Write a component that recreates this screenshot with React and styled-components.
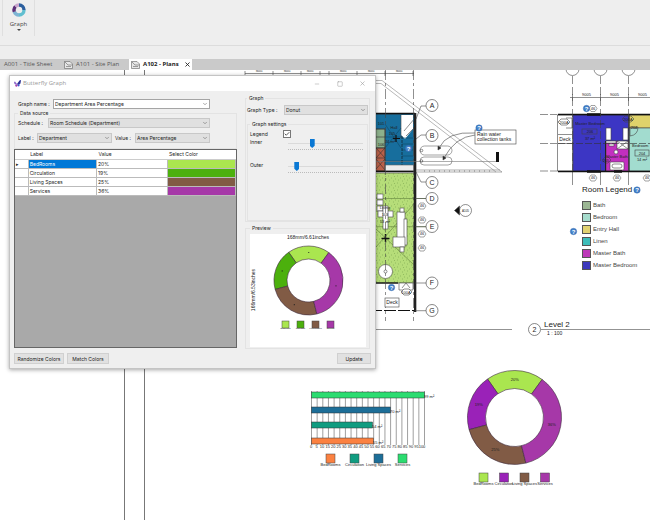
import React, { useState } from 'react';
import styled, { createGlobalStyle } from 'styled-components';
import { Check, ChevronDown, Minus, Square, X } from 'lucide-react';

const departments = [
    { name: 'BedRooms', value: '20%', color: '#aae64f' },
    { name: 'Circulation', value: '19%', color: '#4cb00d' },
    { name: 'Living Spaces', value: '25%', color: '#815b45' },
    { name: 'Services', value: '36%', color: '#a638a8' },
];

const rooms = [
    { name: 'Bath', color: '#9bb693' },
    { name: 'Bedroom', color: '#a6dccd' },
    { name: 'Entry Hall', color: '#e1d271' },
    { name: 'Linen', color: '#3dbdb9' },
    { name: 'Master Bath', color: '#bd39b9' },
    { name: 'Master Bedroom', color: '#3d39bd' },
];

const areaBars = [
    { label: '99 m²', width: 113, y: 392, color: '#2bdc70' },
    { label: '70 m²', width: 79, y: 407, color: '#1d6e98' },
    { label: '54 m²', width: 61, y: 422, color: '#109c80' },
    { label: '55 m²', width: 62, y: 438, color: '#fb8141' },
];

const areaLegend = [
    { name: 'BedRooms', color: '#fb8141' },
    { name: 'Circulation', color: '#109c80' },
    { name: 'Living Spaces', color: '#1d6e98' },
    { name: 'Services', color: '#2bdc70' },
];

// angles run clockwise from twelve o'clock
const segments = [
    { from: -35, to: 36, text: '20%' },
    { from: 255, to: 325, text: '19%' },
    { from: 166, to: 255, text: '25%' },
    { from: 36, to: 166, text: '36%' },
];

const point = (cx, cy, r, deg) => {
    const a = (deg - 90) * Math.PI / 180;
    return [(cx + r * Math.cos(a)).toFixed(2), (cy + r * Math.sin(a)).toFixed(2)];
};

const ringPath = (cx, cy, outer, inner, from, to) => {
    const a = point(cx, cy, outer, from);
    const b = point(cx, cy, outer, to);
    const c = point(cx, cy, inner, to);
    const d = point(cx, cy, inner, from);
    return `M${a} A${outer} ${outer} 0 0 1 ${b} L${c} A${inner} ${inner} 0 0 0 ${d}Z`;
};

const Donut = ({ cx, cy, outer, inner, colors, labels }) => (
    <g>
        {segments.map((s, i) => {
            const [x, y] = point(cx, cy, (outer + inner) / 2, (s.from + s.to) / 2);
            return (
                <g key={s.text}>
                    <path d={ringPath(cx, cy, outer, inner, s.from, s.to)} fill={colors[i]} stroke="#3c2a3c" strokeWidth="0.6" />
                    {labels
                        ? <Note x={x} y={Number(y) + 1} $size={4} $middle>{s.text}</Note>
                        : <circle cx={x} cy={y} r="0.6" fill="#222" />}
                </g>
            );
        })}
    </g>
);

const Bubble = ({ x, y, r = 6, children }) => (
    <g>
        <circle cx={x} cy={y} r={r} fill="#fff" stroke="#555" strokeWidth="0.7" />
        <Note x={x} y={y + 2} $size={7} $middle>{children}</Note>
    </g>
);

const WindowTag = ({ x, y }) => (
    <g>
        <path d={`M${x - 4} ${y} l2 -3 h4 l2 3 l-2 3 h-4z`} fill="#fff" stroke="#666" strokeWidth="0.6" />
        <Note x={x} y={y + 1} $size={4} $middle>46</Note>
    </g>
);

const HelpDot = ({ x, y }) => (
    <g>
        <circle cx={x} cy={y} r="3.2" fill="#4380c9" stroke="#2a5fa5" strokeWidth="0.4" />
        <text x={x} y={y + 2} fontSize="6" fontWeight="700" textAnchor="middle" fill="#fff">?</text>
    </g>
);

const GroundPlan = () => (
    <g fill="none" stroke="#444" strokeWidth="0.6">
        <path d="M245 73.5H414" />
        <path d="M245 71v5M273 71v5M301 71v5M320 71v5M329 71v5M357 71v5M385 71v5M413 71v5" />
        <g stroke="none">
            {[259, 287, 310, 343, 371, 399].map(x => <Note key={x} x={x} y={72} $size={3} $middle>9005</Note>)}
        </g>
        <path d="M376 80.5h6L502 172M376 83.5h5L496 172" stroke="#888" />

        <rect x="370" y="114" width="44" height="57" fill="#176e9d" />
        <rect x="376" y="129" width="9" height="19" fill="#8db18c" />
        <rect x="376" y="148" width="9" height="23" fill="#bb6048" />
        <path d="M376 129h9v42h-9M376 137h9M376 148h9M376 158h9M376 148l9 10M385 148l-9 10M376 159l9 11M385 159l-9 10" stroke="#333" />
        <path d="M401 115h12v14l-8 10l-4-4z" fill="#fff" stroke="none" />
        <path d="M401 115v23M404 131l11-13M406 136l9-9" />
        <path d="M385 148l16-20M385 124l16 24M385 137h16M402 138h11M402 144h11M402 150h11M402 156h11M402 161h11M385 161h17" stroke="#0d4867" />
        <path d="M396 135v7M393 138.5h7" stroke="#111" strokeWidth="1.2" />
        <path d="M402 136v32" stroke="#111" strokeDasharray="3 1" />
        <path d="M370 113.5h45" stroke="#111" strokeWidth="1.5" />
        <path d="M385 165h29v6h-29z" fill="#ececec" stroke="#666" />
        <path d="M370 171.5h45" stroke="#111" strokeWidth="1.3" />
        <g stroke="none">
            <Note x={394} y={129} $size={4} $middle>Hall</Note>
            <Note x={392} y={135} $size={4} $middle>105</Note>
            <Note x={390} y={143} $size={4} $middle>24 m²</Note>
            <Note x={381} y={125} $size={4} $middle>101</Note>
            <Note x={381} y={146} $size={4} $middle>106</Note>
        </g>

        <rect x="370" y="173" width="44" height="110" fill="#b6dd79" />
        <rect x="370" y="173" width="44" height="110" fill="url(#stipple)" stroke="none" />
        <path d="M376 247l38-43M376 229l38 36M376 198.500h51M376 226.700h51" stroke="#61823c" />
        <g fill="#fff">
            <rect x="377" y="194" width="6" height="5" />
            <rect x="377" y="200" width="6" height="5" />
            <rect x="377" y="206" width="6" height="5" />
            <rect x="378" y="211" width="15" height="6" />
            <rect x="383" y="206" width="5" height="23" />
            <rect x="397" y="212" width="8" height="31" />
            <rect x="404" y="219" width="3" height="26" />
            <rect x="393" y="237" width="12" height="10" />
            <rect x="400" y="208" width="4" height="4" />
            <rect x="400" y="247" width="4" height="5" />
            <circle cx="385.500" cy="271.500" r="7" />
            <circle cx="385.500" cy="271.500" r="1.500" />
        </g>
        <g stroke="none">
            <Note x={385} y={209} $size={4} $middle>Living</Note>
            <Note x={385} y={216} $size={4} $middle>103</Note>
            <Note x={385} y={223} $size={4} $middle>53 m²</Note>
        </g>
        <path d="M385.500 234v8M381.500 238.500h8" stroke="#111" strokeWidth="1.400" />
        <path d="M370 283h28" stroke="#111" strokeWidth="1.300" />
        <path d="M370 310.500h45" stroke="#111" strokeWidth="1.200" strokeDasharray="12 2" />
        <path d="M399 283h14v7h-14zM402 288l4-5l4 5" fill="#fff" />
        <path d="M401 292l3-3h5l3 3l-3 3h-5z" fill="#fff" />
        <Note x={406} y={294} $size={4} $middle stroke="none">100A</Note>
        <path d="M415 113v199" stroke="#222" strokeWidth="2" />
        <path d="M416.500 113v199" stroke="#888" />
        <path d="M385.500 70v251M413.500 70v251" strokeDasharray="10 3 3 3" />
        <rect x="385" y="298" width="14" height="9" fill="#fff" />
        <Note x={392} y={304} $size={5} $middle stroke="none">Deck</Note>

        <path d="M376 161.500h121M416 170h84M416 172h86" stroke="#777" />
        <path d="M424 171h70" stroke="#999" strokeWidth="1.500" strokeDasharray="1 4" />
        <rect x="420" y="146" width="32" height="9" rx="4.500" stroke="#666" />
        <rect x="420" y="157" width="32" height="8" rx="4" stroke="#666" />
        <circle cx="421.500" cy="150.500" r="1.300" />
        <circle cx="421.500" cy="161" r="1.300" />
        <path d="M475 133q-28-2-36 15M475 135q-20 2-31 23" />
        <path d="M438 150l0-4l3 2zM443 160l0-4l3 2z" fill="#222" />
        <rect x="496" y="152" width="3" height="10" fill="#111" stroke="none" />
        <path d="M416 119l5-13h5M416 139l5-4h5M416 172l5 10h5M415 198.500h12M415 226.700h12M415 283h12M415 310.700h12" />

        <g stroke="none">
            <Bubble x={432} y={198.5}>D</Bubble>
            <Bubble x={432} y={182.5}>C</Bubble>
            <Bubble x={432} y={105.5}>A</Bubble>
            <Bubble x={432} y={135.5}>B</Bubble>
            <Bubble x={432} y={226.5}>E</Bubble>
            <Bubble x={432} y={283}>F</Bubble>
            <Bubble x={432} y={310.5}>G</Bubble>
            {[206, 220, 234, 248].map(y => <WindowTag key={y} x={422} y={y} />)}
        </g>
        <circle cx="465.500" cy="210.500" r="6" fill="#fff" />
        <path d="M459.500 206v9l-5-4.500z" fill="#111" />
        <Note x={465.5} y={212} $size={3} $middle stroke="none">A105</Note>
        <rect x="475" y="130" width="41" height="14" fill="#fff" />
        <g stroke="none">
            <Note x={477} y={136} $size={5}>Rain water</Note>
            <Note x={477} y={141} $size={5}>collection tanks</Note>
            <HelpDot x={479} y={128} />
            <HelpDot x={408.5} y={148.5} />
            <HelpDot x={391.5} y={287.5} />
        </g>
    </g>
);

const UpperPlan = () => (
    <g fill="none" stroke="#444" strokeWidth="0.6">
        {[572.5, 600.5, 628.5].map(x => <circle key={x} cx={x} cy="69" r="6.5" fill="#fff" />)}
        <path d="M570 97.500h80" />
        <path d="M572.500 94v7M600.500 94v7M628.500 94v7M572.500 171v14M600.500 171v14M628.500 171v14" />
        <path d="M540 114.500h17M540 143.500h17M540 171h17" strokeDasharray="8 2" />
        <rect x="557.500" y="115" width="15" height="56" fill="#fff" />
        <path d="M558 134.500h14M558 143.500h14M566 128h6v-10h-6" />
        <rect x="573" y="115" width="56" height="56" fill="#3c36c4" />
        <rect x="606" y="141" width="23" height="30" fill="#c22fc0" />
        <rect x="629" y="115" width="60" height="13" fill="#dfd26b" />
        <rect x="629" y="128" width="60" height="43" fill="#a2dccf" />
        <g fill="#fff">
            <rect x="606" y="128" width="5" height="12" />
            <rect x="623" y="128" width="5" height="12" />
            <path d="M606 141h10v2h-10z" />
            <rect x="617" y="141" width="11" height="8" />
            <rect x="609" y="144" width="5" height="2" />
            <circle cx="616" cy="152" r="2" />
            <rect x="610" y="162" width="14" height="8" rx="1" />
            <rect x="612" y="164" width="10" height="4" rx="2" />
        </g>
        <path d="M617 141l11 8M628 141l-11 8M602 160l3-3h3l3 3l-3 3h-3zM622 119l3-3h6l3 3l-3 3h-6zM630 127h8q0 8-8 9z" />
        <path d="M605.500 141v30M629 115v56" stroke="#222" strokeWidth="1" />
        <path d="M558 114.500h92M558 171.500h92" stroke="#111" strokeWidth="1.500" />
        <path d="M587 114.500h14M587 171.500h14M614 171.500h8" stroke="#111" strokeWidth="2.400" />
        <path d="M572.500 76v95M600.500 76v95M628.500 76v95" strokeDasharray="8 3" />
        <path d="M558 143.500h92" stroke="#333" strokeDasharray="7 2" />
        <path d="M558 122l3-3h6l3 3l-3 3h-6z" fill="#fff" />
        <rect x="582" y="129" width="15" height="5" />
        <rect x="635" y="150" width="14" height="6" />
        <g stroke="none">
            {[586.5, 614.5, 642.5].map(x => <Note key={x} x={x} y={96} $size={4} $middle>9005</Note>)}
            <Note x={564} y={124} $size={4} $middle>200A</Note>
            <Note x={565} y={141} $size={5} $middle>Deck</Note>
            <Note x={590} y={125} $size={4} $middle>Master Bedroom</Note>
            <Note x={590} y={133} $size={4} $middle>206</Note>
            <Note x={590} y={140} $size={4} $middle>37 m²</Note>
            <Note x={617} y={158} $size={4} $middle>Master Bath</Note>
            <Note x={628} y={121} $size={4} $middle>200A</Note>
            <Note x={634} y={129} $size={4} $middle>204</Note>
            <Note x={606} y={162} $size={4} $middle>205</Note>
            <Note x={632} y={147} $size={4}>Bedroom</Note>
            <Note x={642} y={155} $size={4} $middle>204</Note>
            <Note x={642} y={161} $size={4} $middle>14 m²</Note>
            <WindowTag x={593} y={108.5} />
            <WindowTag x={593} y={178} />
            <WindowTag x={617} y={178} />
            <WindowTag x={647} y={178} />
            <HelpDot x={586.5} y={108.5} />
        </g>
    </g>
);

const AreaChart = () => (
    <g>
        {Array.from({ length: 21 }, (_, i) => (
            <g key={i}>
                <path d={`M${311.5 + i * 5.65} 391V445`} stroke="#777" strokeWidth="0.7" />
                <Note x={311 + i * 5.55} y={448} $size={4} $middle>{i * 5}</Note>
            </g>
        ))}
        {areaBars.map(bar => (
            <g key={bar.label}>
                <rect x="311.500" y={bar.y} width={bar.width} height="6" fill={bar.color} stroke="#333" strokeWidth="0.5" />
                <Note x={311 + bar.width} y={bar.y + 6} $size={4}>{bar.label}</Note>
            </g>
        ))}
        <SwatchRow items={areaLegend} x={326} y={454} step={24} size={9} />
    </g>
);

const SwatchRow = ({ items, x, y, step, size, textSize = 4 }) => items.map((item, i) => (
    <g key={item.name}>
        <rect x={x + i * step} y={y} width={size} height={size} fill={item.color} stroke="#444" strokeWidth="0.5" />
        <Note x={x + i * step + size / 2} y={y + size + textSize - 1} $size={textSize} $middle>{item.name}</Note>
    </g>
));

const ButterflyMark = () => (
    <svg width="7" height="7" viewBox="0 0 14 14" aria-hidden="true">
        <path d="M6 8L11 1l3-1-1 7-5 3z" fill="#2a2f94" />
        <path d="M6 8L2 3 0 4l1 4 4 2z" fill="#8a63c8" />
        <path d="M7 9l5 0-2 4-3-1z" fill="#3a56d4" />
        <path d="M7 9L2 10l2 4 3-2z" fill="#a83fa8" />
    </svg>
);

const SheetIcon = () => (
    <svg width="9" height="8" viewBox="0 0 18 16" fill="none" stroke="#777" strokeWidth="1.4" aria-hidden="true">
        <path d="M1 1h11l5 5v9H1z" fill="#e6e6e6" />
        <path d="M1 1l7 7h9M4 11h10" />
    </svg>
);

const GraphLogo = () => (
    <svg width="14" height="14" viewBox="0 0 14 14" fill="none" strokeWidth="3.4" aria-hidden="true">
        <path d="M7 2a5 5 0 0 1 5 5" stroke="#2c5f9e" />
        <path d="M12 7a5 5 0 0 1-5 5" stroke="#61bfd0" />
        <path d="M7 12a5 5 0 0 1-4.700-3.300" stroke="#7eb4d4" />
        <path d="M2.300 8.700a5 5 0 0 1 1.200-5.200" stroke="#5b2f78" />
        <path d="M3.500 3.500a5 5 0 0 1 3.500-1.500" stroke="#c9a6cd" />
    </svg>
);

const Picker = ({ id, value }) => (
    <PickerBox>
        <PickerSelect id={id} defaultValue={value}>
            <option>{value}</option>
        </PickerSelect>
        <Arrow size={6} />
    </PickerBox>
);

const DepartmentTable = () => (
    <TableArea>
        <Table>
            <thead>
                <tr>
                    <Head $width={6} aria-label="Current row" />
                    <Head $width={31}>Label</Head>
                    <Head $width={32}>Value</Head>
                    <Head $width={31}>Select Color</Head>
                </tr>
            </thead>
            <tbody>
                {departments.map((d, i) => (
                    <tr key={d.name}>
                        <Cell>{i === 0 && '▸'}</Cell>
                        <Cell $selected={i === 0}>{d.name}</Cell>
                        <Cell>{d.value}</Cell>
                        <Cell $fill={d.color} />
                    </tr>
                ))}
            </tbody>
        </Table>
    </TableArea>
);

const GraphDialog = () => {
    const [graphName, setGraphName] = useState('Department Area Percentage');
    const [legend, setLegend] = useState(true);
    const [inner, setInner] = useState(31);
    const [outer, setOuter] = useState(9);

    return (
        <Dialog role="dialog" aria-labelledby="dialog-title">
            <TitleBar>
                <ButterflyMark />
                <Title id="dialog-title">Butterfly Graph</Title>
                <WindowButton aria-label="Minimize"><Minus size={6} strokeWidth={2} /></WindowButton>
                <WindowButton aria-label="Maximize"><Square size={6} strokeWidth={2} /></WindowButton>
                <WindowButton aria-label="Close"><X size={7} strokeWidth={2} /></WindowButton>
            </TitleBar>
            <Body>
                <DataColumn>
                    <NameRow>
                        <Label $width={35} htmlFor="graph-name">Graph name :</Label>
                        <PickerBox>
                            <NameInput id="graph-name" value={graphName} onChange={e => setGraphName(e.target.value)} />
                            <Arrow size={6} />
                        </PickerBox>
                    </NameRow>
                    <SourceGroup>
                        <Legend>Data source</Legend>
                        <Row>
                            <Label $width={30} htmlFor="schedule">Schedule :</Label>
                            <Picker id="schedule" value="Room Schedule (Department)" />
                        </Row>
                        <Row>
                            <Label $width={19} htmlFor="label-field">Label :</Label>
                            <Picker id="label-field" value="Department" />
                            <Label $width={23} $inset htmlFor="value-field">Value :</Label>
                            <Picker id="value-field" value="Area Percentage" />
                        </Row>
                    </SourceGroup>
                    <DepartmentTable />
                </DataColumn>
                <div>
                    <GraphGroup>
                        <Legend>Graph</Legend>
                        <Row>
                            <Label $width={37} htmlFor="graph-type">Graph Type :</Label>
                            <Picker id="graph-type" value="Donut" />
                        </Row>
                        <SettingsGroup>
                            <Legend>Graph settings</Legend>
                            <CheckRow>
                                <Label $width={33} htmlFor="legend">Legend</Label>
                                <CheckBox>
                                    <CheckInput id="legend" type="checkbox" checked={legend} onChange={e => setLegend(e.target.checked)} />
                                    {legend && <Tick size={6} strokeWidth={3} />}
                                </CheckBox>
                            </CheckRow>
                            <SliderRow>
                                <Label $width={38} htmlFor="inner">Inner</Label>
                                <Slider id="inner" type="range" value={inner} onChange={e => setInner(e.target.value)} />
                            </SliderRow>
                            <SliderRow>
                                <Label $width={38} htmlFor="outer">Outer</Label>
                                <Slider id="outer" type="range" value={outer} onChange={e => setOuter(e.target.value)} />
                            </SliderRow>
                        </SettingsGroup>
                    </GraphGroup>
                    <PreviewGroup>
                        <Legend>Preview</Legend>
                        <Preview viewBox="0 0 116 113">
                            <Note x={58} y={5} $size={5} $middle>168mm/6.61inches</Note>
                            <g transform="rotate(-90 5 56)">
                                <Note x={5} y={56} $size={5} $middle>166mm/6.53inches</Note>
                            </g>
                            <Donut cx={58.5} cy={46.5} outer={34.5} inner={21.5} colors={['#aae64f', '#4cb00d', '#815b45', '#a638a8']} />
                            {legend && <SwatchRow items={departments} x={32} y={87} step={15} size={7} textSize={2} />}
                        </Preview>
                    </PreviewGroup>
                </div>
            </Body>
            <Footer>
                <Button $width={50}>Randomize Colors</Button>
                <Button $width={42}>Match Colors</Button>
                <Button $width={34} $end>Update</Button>
            </Footer>
        </Dialog>
    );
};

const App = () => (
    <Page>
        <GlobalStyle />
        <Ribbon>
            <RibbonButton>
                <GraphLogo />
                Graph
                <Caret />
            </RibbonButton>
        </Ribbon>
        <Options />
        <Tabs>
            <Tab $width={61} href="#a001">A001 - Title Sheet</Tab>
            <Tab $width={66} href="#a101"><SheetIcon />A101 - Site Plan</Tab>
            <Tab $width={63} $active href="#a102"><SheetIcon />A102 - Plans<CloseTab size={7} strokeWidth={3} /></Tab>
        </Tabs>
        <Sheet>
            <Drawing>
                <defs>
                    <pattern id="stipple" width="9" height="7" patternUnits="userSpaceOnUse">
                        <path d="M1 1h.6M4 3h.6M7 1.500h.6M2 5h.6M6 6h.6M8 4h.6" stroke="#4f7a2d" strokeWidth="0.6" />
                    </pattern>
                </defs>
                {/* sheet units start at the top of the window, the sheet itself 70 below */}
                <g transform="translate(0 -70)">
                    <path d="M124.500 70V2000M144.500 70V2000" stroke="#777" strokeWidth="1" />
                    <path d="M376 329.500H512M541 329.500H4000" stroke="#777" strokeWidth="0.8" />
                    <GroundPlan />
                    <UpperPlan />
                    <Bubble x={534.5} y={329.5}>2</Bubble>
                    <Note x={544} y={327} $size={8}>Level 2</Note>
                    <Note x={547} y={335} $size={5}>1 : 100</Note>
                    <HelpDot x={637} y={190} />
                    <HelpDot x={573.5} y={231.5} />
                    <AreaChart />
                    <Donut cx={514.5} cy={417.5} outer={47} inner={29} labels colors={['#aae64f', '#9a22b8', '#815b45', '#a638a8']} />
                    <SwatchRow
                        items={departments.map(d => d.name === 'Circulation' ? { ...d, color: '#9a22b8' } : d)}
                        x={479} y={473} step={20.5} size={9}
                    />
                </g>
            </Drawing>
            <RoomLegend>
                <RoomTitle>Room Legend</RoomTitle>
                {rooms.map(room => (
                    <Room key={room.name}><Swatch $color={room.color} />{room.name}</Room>
                ))}
            </RoomLegend>
            <GraphDialog />
        </Sheet>
    </Page>
);

const GlobalStyle = createGlobalStyle`
    * { box-sizing: border-box; }
    body {
        margin: 0;
        background: #fff;
        font-family: "Liberation Sans", Arial, sans-serif;
    }
    button, input, select { font: inherit; color: inherit; }
`;

const Page = styled.div`
    display: flex;
    flex-direction: column;
    min-height: 100vh;
`;

const Ribbon = styled.header`
    height: 46px;
    padding-left: 2px;
    background: #eee;
    border-bottom: 1px solid #dcdcdc;
`;

const RibbonButton = styled.button`
    display: flex;
    flex-direction: column;
    align-items: center;
    width: 33px;
    height: 36px;
    padding: 3px 0 0;
    gap: 3px;
    border: solid #dfdfdf;
    border-width: 0 1px;
    background: none;
    color: #444;
    font: 6px/8px "Open Sans", sans-serif;
`;

const Caret = styled.span`
    margin-top: -2px;
    border: 2px solid transparent;
    border-top-color: #444;
    border-bottom: 0;
`;

const Options = styled.div`
    height: 13px;
    background: #eee;
`;

const Tabs = styled.nav`
    display: flex;
    gap: 1px;
    height: 11px;
    background: #cacaca;
`;

const Tab = styled.a`
    display: flex;
    align-items: center;
    gap: 3px;
    width: ${p => p.$width}px;
    padding-left: ${p => (p.href === '#a001' ? 4 : 2)}px;
    background: ${p => (p.$active ? '#fff' : 'none')};
    color: ${p => (p.$active ? '#222' : '#555')};
    font: ${p => (p.$active ? 700 : 400)} 6px/11px "Open Sans", sans-serif;
    text-decoration: none;
    white-space: nowrap;
`;

const CloseTab = styled(X)`
    margin-left: auto;
    margin-right: 1px;
`;

const Sheet = styled.main`
    position: relative;
    flex: 1;
    min-height: 430px;
    overflow: hidden;
`;

const Drawing = styled.svg`
    position: absolute;
    inset: 0;
    width: 100%;
    height: 100%;
`;

const Note = styled.text`
    font-family: "Liberation Sans", Arial, sans-serif;
    font-size: ${p => p.$size}px;
    text-anchor: ${p => (p.$middle ? 'middle' : 'start')};
    fill: #222;
`;

const RoomLegend = styled.section`
    position: absolute;
    left: 582px;
    top: 115px;
    color: #444;
    font-size: 6px;
`;

const RoomTitle = styled.h2`
    margin: 0 0 4px;
    color: #222;
    font-size: 8px;
    font-weight: 400;
    line-height: 10px;
`;

const Room = styled.div`
    display: flex;
    align-items: center;
    gap: 2px;
    height: 12px;
`;

const Swatch = styled.span`
    width: 9px;
    height: 9px;
    border: 1px solid #555;
    background: ${p => p.$color};
`;

const Dialog = styled.section`
    position: absolute;
    left: 9px;
    top: 5px;
    width: 367px;
    background: #efefef;
    border: 1px solid #c4c4c4;
    box-shadow: 0 1px 4px rgba(0, 0, 0, 0.35);
    color: #222;
    font: 5px/8px Inter, sans-serif;
`;

const TitleBar = styled.header`
    display: flex;
    align-items: center;
    height: 15px;
    padding: 0 2px 0 4px;
    gap: 2px;
    background: #fff;
`;

const Title = styled.h1`
    flex: 1;
    margin: 0;
    color: #999;
    font: 400 6px/15px "Open Sans", sans-serif;
`;

const WindowButton = styled.button`
    display: grid;
    place-items: center;
    width: 21px;
    height: 15px;
    padding: 0;
    border: 0;
    background: none;
    color: #999;
`;

const Body = styled.div`
    display: grid;
    grid-template-columns: 223px minmax(0, 1fr);
    gap: 8px;
    padding: 3px 5px 0 4px;
`;

const DataColumn = styled.div`
    display: flex;
    flex-direction: column;
    padding: 5px 0 1px;
`;

const Row = styled.div`
    display: flex;
    align-items: center;
    height: 10px;
`;

const NameRow = styled(Row)`
    padding: 0 27px 0 4px;
`;

const Label = styled.label`
    flex: none;
    width: ${p => p.$width}px;
    padding-left: ${p => (p.$inset ? 3 : 0)}px;
    white-space: nowrap;
`;

const Group = styled.fieldset`
    min-width: 0;
    margin: 0;
    border: 1px solid #e3e3e3;
`;

const SourceGroup = styled(Group)`
    display: flex;
    flex-direction: column;
    gap: 5px;
    padding: 1px 26px 5px 3px;
`;

const GraphGroup = styled(Group)`
    height: 128px;
    padding: 3px 1px 0;
`;

const SettingsGroup = styled(Group)`
    height: 101px;
    margin-top: 5px;
    padding: 2px 4px 0 2px;
`;

const PreviewGroup = styled(Group)`
    margin-top: 2px;
    padding: 2px 3px 1px 4px;
`;

const Legend = styled.legend`
    padding: 0 2px;
    line-height: 8px;
`;

const PickerBox = styled.div`
    position: relative;
    display: flex;
    flex: 1;
    height: 10px;
`;

const PickerSelect = styled.select`
    appearance: none;
    width: 100%;
    padding: 0 1px;
    border: 1px solid #c8c8c8;
    border-radius: 0;
    background: #e0e0e0;
`;

const NameInput = styled.input`
    width: 100%;
    padding: 0 1px;
    border: 1px solid #a5a5a5;
    background: #fff;
`;

const Arrow = styled(ChevronDown)`
    position: absolute;
    right: 2px;
    top: 2px;
    color: #555;
    pointer-events: none;
`;

const CheckRow = styled(Row)`
    height: 8px;
`;

const CheckBox = styled.span`
    position: relative;
    width: 8px;
    height: 8px;
`;

const CheckInput = styled.input`
    appearance: none;
    display: block;
    width: 8px;
    height: 8px;
    margin: 0;
    border: 1px solid #777;
    background: #fff;
`;

const Tick = styled(Check)`
    position: absolute;
    left: 1px;
    top: 1px;
    pointer-events: none;
`;

const SliderRow = styled.div`
    display: flex;
    height: 23px;
`;

const Slider = styled.input`
    appearance: none;
    flex: 1;
    width: 0;
    min-width: 0;
    height: 12px;
    margin: 0;
    border-bottom: 1px dotted #bbb;
    background: linear-gradient(#dadada, #dadada) 0 5px / 100% 1px no-repeat;

    &::-webkit-slider-thumb {
        appearance: none;
        width: 5px;
        height: 9px;
        background: #0a78d4;
        clip-path: polygon(0 0, 100% 0, 100% 75%, 50% 100%, 0 75%);
    }
`;

const Preview = styled.svg`
    display: block;
    width: 100%;
    background: #fff;
`;

const TableArea = styled.div`
    flex: 1;
    border: 1px solid #666;
    background: #a9a9a9;
`;

const Table = styled.table`
    width: 100%;
    table-layout: fixed;
    border-collapse: collapse;
    background: #fff;
`;

const Head = styled.th`
    width: ${p => p.$width}%;
    height: 9px;
    padding: 0 2px;
    border-bottom: 1px solid #ccc;
    font-weight: 400;
    line-height: 8px;
    text-align: left;
`;

const Cell = styled.td`
    height: 9px;
    padding: 0 1px;
    border-right: 1px solid #bbb;
    border-bottom: 1px solid #bbb;
    background: ${p => p.$fill || (p.$selected ? '#0078d7' : '#fff')};
    color: ${p => (p.$selected ? '#fff' : 'inherit')};
    line-height: 8px;
`;

const Footer = styled.footer`
    display: flex;
    gap: 3px;
    padding: 4px 4px;
`;

const Button = styled.button`
    width: ${p => p.$width}px;
    height: 11px;
    margin-left: ${p => (p.$end ? 'auto' : 0)};
    padding: 0;
    border: 1px solid #d0d0d0;
    background: #e1e1e1;
    white-space: nowrap;
`;

export default App;
